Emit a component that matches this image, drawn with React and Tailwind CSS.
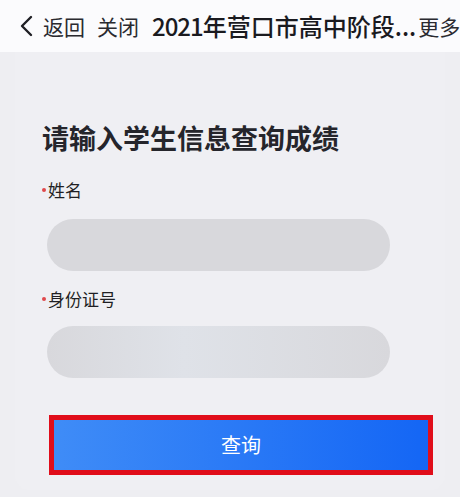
import React from "react";

export default function App() {
  const font = { fontFamily: '"Noto Sans CJK SC", "Noto Sans", sans-serif' };
  return (
    <div className="w-[460px] h-[497px] overflow-hidden bg-[#eeeef2] text-[#1f1f24]" style={font}>
      <div className="h-[52px] bg-[#fbfbfd] flex items-center whitespace-nowrap overflow-hidden">
        <svg className="ml-[19px] mr-[9px] shrink-0" width="15" height="22" viewBox="0 0 15 22">
          <path d="M12 2 L3 11 L12 20" fill="none" stroke="#1f1f24" strokeWidth="2.4" strokeLinecap="round" strokeLinejoin="round" />
        </svg>
        <span className="text-[21px] leading-none text-[#2a2a30]">返回</span>
        <span className="text-[21px] leading-none ml-[12px] text-[#2a2a30]">关闭</span>
        <span className="text-[24px] leading-none ml-[13px] font-medium text-[#1a1a1f]">
          <span className="tracking-[-1px]">2021</span>年营口市高中阶段...
        </span>
        <span className="text-[21px] leading-none ml-[2px] text-[#2a2a30]">更多</span>
      </div>
      <div className="mx-[15px] h-[438px] rounded-b-[14px] bg-[#efeff3] pt-[72px] pl-[27px] pr-[12px]">
        <div className="text-[27px] leading-none font-bold text-[#25252b]">请输入学生信息查询成绩</div>
        <div className="mt-[30px] flex items-start">
          <span className="mt-[7px] w-[4px] h-[4px] rounded-full bg-[#e0484c] shrink-0"></span>
          <span className="text-[17px] leading-none ml-[2px]">姓名</span>
        </div>
        <div className="mt-[21px] ml-[5px] h-[52px] w-[343px] rounded-full bg-[#d8d8dc]"></div>
        <div className="mt-[19px] flex items-start">
          <span className="mt-[7px] w-[4px] h-[4px] rounded-full bg-[#e0484c] shrink-0"></span>
          <span className="text-[17px] leading-none ml-[2px]">身份证号</span>
        </div>
        <div className="mt-[19px] ml-[5px] h-[52px] w-[343px] rounded-full bg-[linear-gradient(90deg,#d8d8dc,#dfe2e8_40%,#d8d8dc)]"></div>
        <div className="mt-[37px] ml-[7px] w-[384px] h-[60px] border-[5px] border-[#e00d1a] bg-[linear-gradient(90deg,#3f8cf7,#1466f5)] flex items-center justify-center">
          <span className="text-white text-[20px] leading-none">查询</span>
        </div>
      </div>
    </div>
  );
}
